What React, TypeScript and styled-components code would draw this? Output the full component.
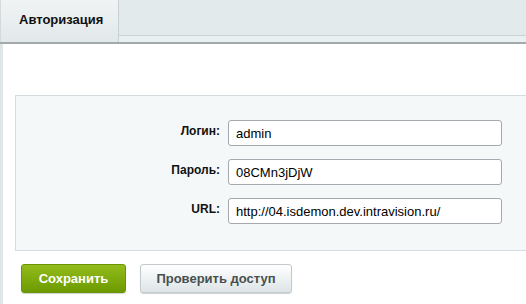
import styled, { createGlobalStyle } from 'styled-components';

const GlobalStyle = createGlobalStyle`
    html, body {
        margin: 0;
        padding: 0;
        background: #ffffff;
        font-family: "Liberation Sans", Arial, sans-serif;
    }
`;

const Page = styled.div`
    width: 526px;
    height: 304px;
    overflow: hidden;
    display: flex;
    flex-direction: column;
`;

const TabBar = styled.div`
    display: flex;
    align-items: stretch;
    height: 44px;
    background: #e3eaec;
    border-bottom: 2px solid #a4a9ab;
    box-sizing: border-box;
`;

const Tab = styled.div`
    width: 119px;
    box-sizing: border-box;
    padding: 12px 0 0 18px;
    font-size: 13px;
    font-weight: bold;
    color: #111;
    background: linear-gradient(to bottom, #f0f3f4, #e2e9eb);
    border-left: 1px solid #d3dadc;
    border-right: 1px solid #c9d0d2;
`;

const TabFiller = styled.div`
    flex: 1;
    display: flex;
    flex-direction: column;
    justify-content: flex-end;

    &::after {
        content: '';
        display: block;
        height: 6px;
        background: #e9f0f0;
        border-top: 1px solid #ccd3d5;
    }
`;

const Body = styled.div`
    flex: 1;
    border-left: 3px solid #dfe6e8;
    padding: 51px 0 0 12px;
    display: flex;
    flex-direction: column;
`;

const Panel = styled.div`
    background: #f5f8f9;
    border: 1px solid #d4dcdf;
    border-right: none;
    height: 156px;
    box-sizing: border-box;
    padding-top: 24px;
    display: grid;
    grid-template-columns: 204px 274px;
    column-gap: 8px;
    row-gap: 13px;
    align-content: start;
`;

const Label = styled.label`
    justify-self: end;
    align-self: start;
    padding-top: 4px;
    font-size: 12px;
    font-weight: bold;
    color: #111;
`;

const Input = styled.input`
    height: 26px;
    box-sizing: border-box;
    border: 1px solid #a3a9ae;
    border-radius: 3px;
    background: #ffffff;
    padding: 0 7px;
    font-family: "Liberation Sans", Arial, sans-serif;
    font-size: 13px;
    color: #000;
    outline: none;
`;

const Actions = styled.div`
    display: flex;
    gap: 14px;
    padding: 13px 0 0 6px;
`;

const Button = styled.button<{ $primary?: boolean }>`
    height: 29px;
    box-sizing: border-box;
    border-radius: 3px;
    font-family: "Liberation Sans", Arial, sans-serif;
    font-size: 13px;
    font-weight: bold;
    cursor: pointer;
    padding: 0;
    width: ${p => (p.$primary ? '105px' : '152px')};
    color: ${p => (p.$primary ? '#ffffff' : '#48504f')};
    background: ${p =>
        p.$primary
            ? 'linear-gradient(to bottom, #93bc1c, #6c9a00)'
            : 'linear-gradient(to bottom, #ffffff, #dde4e7)'};
    border: 1px solid ${p => (p.$primary ? '#6b9400' : '#c3cacd')};
    box-shadow: 0 1px 1px rgba(0, 0, 0, 0.18);
`;

export default function App() {
    return (
        <Page>
            <GlobalStyle />
            <TabBar>
                <Tab>Авторизация</Tab>
                <TabFiller />
            </TabBar>
            <Body>
                <Panel>
                    <Label>Логин:</Label>
                    <Input defaultValue="admin" />
                    <Label>Пароль:</Label>
                    <Input defaultValue="08CMn3jDjW" />
                    <Label>URL:</Label>
                    <Input defaultValue="http://04.isdemon.dev.intravision.ru/" />
                </Panel>
                <Actions>
                    <Button $primary>Сохранить</Button>
                    <Button>Проверить доступ</Button>
                </Actions>
            </Body>
        </Page>
    );
}
